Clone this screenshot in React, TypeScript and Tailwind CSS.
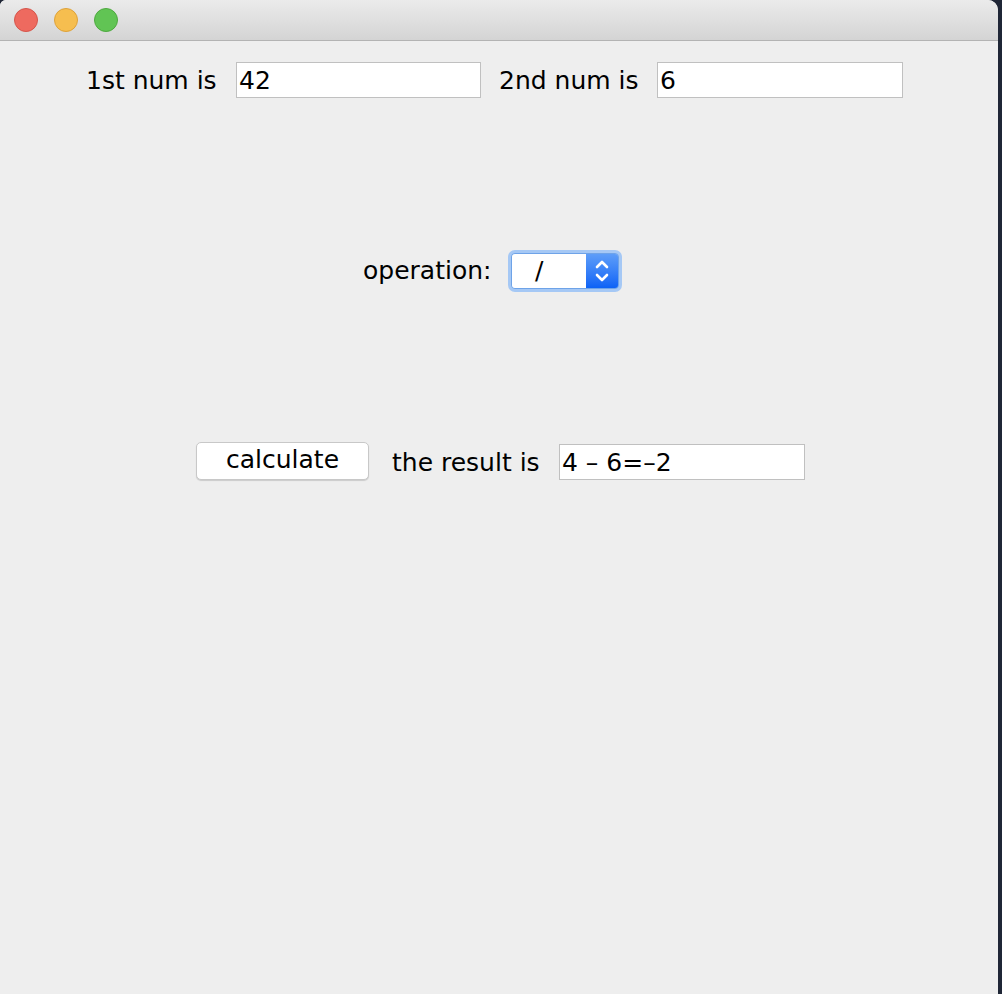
import { useState } from "react";

const font = { fontFamily: '"DejaVu Sans", "Noto Sans", sans-serif' };

const TrafficLights = () => (
  <div className="flex items-center gap-4 pl-[14px]">
    <div className="w-6 h-6 rounded-full bg-[#ee6a5f] border border-[#d5554b]" />
    <div className="w-6 h-6 rounded-full bg-[#f6be4f] border border-[#dea23a]" />
    <div className="w-6 h-6 rounded-full bg-[#61c454] border border-[#4ea93f]" />
  </div>
);

const Field = ({ value, className = "" }: { value: string; className?: string }) => (
  <input
    readOnly
    value={value}
    className={`h-[36px] bg-white border border-[#c0c0c0] pl-[2px] text-[25px] text-black outline-none ${className}`}
    style={font}
  />
);

const Chevrons = () => (
  <svg width="16" height="28" viewBox="0 0 16 28" fill="none" stroke="white" strokeWidth="2.6" strokeLinecap="round" strokeLinejoin="round">
    <path d="M3 10 L8 5 L13 10" />
    <path d="M3 18 L8 23 L13 18" />
  </svg>
);

export default function App() {
  const [op] = useState("/");

  return (
    <div className="w-[1002px] h-[994px] bg-[#1f2636] flex" style={font}>
      <div className="w-[998px] h-full bg-[#eeeeee] rounded-tr-[10px] rounded-tl-[6px] overflow-hidden flex flex-col">
        {/* title bar */}
        <div className="h-[41px] shrink-0 flex items-center bg-gradient-to-b from-[#ebebeb] to-[#d4d4d4] border-b border-[#b3b3b3]">
          <TrafficLights />
        </div>

        {/* first row */}
        <div className="flex items-center pl-[86px] mt-[20px] text-[25px] text-black">
          <span className="w-[150px] mt-[1px]">1st num is</span>
          <Field value="42" className="w-[245px]" />
          <span className="ml-[18px] w-[158px] mt-[1px]">2nd num is</span>
          <Field value="6" className="w-[246px]" />
        </div>

        {/* operation */}
        <div className="flex items-center pl-[363px] mt-[150px] text-[25px] text-black">
          <span className="w-[145px]">operation:</span>
          <div className="h-[42px] w-[114px] shrink-0 rounded-[7px] p-[3px] bg-[#a5c8f5] flex">
            <div className="flex-1 flex rounded-[4px] overflow-hidden border border-[#6ea3e8]">
              <div className="flex-1 bg-white flex items-center pl-[23px]">{op}</div>
              <div className="w-[32px] bg-gradient-to-b from-[#5d9df8] to-[#0b62f6] flex items-center justify-center">
                <Chevrons />
              </div>
            </div>
          </div>
        </div>

        {/* result row */}
        <div className="flex items-center pl-[196px] mt-[150px] text-[25px] text-black">
          <button className="h-[38px] w-[173px] bg-white rounded-[5px] border border-[#c8c8c8] shadow-[0_1px_1px_rgba(0,0,0,0.15)] text-[25px] leading-none pb-[3px]">
            calculate
          </button>
          <span className="ml-[23px] w-[167px] mt-[2px]">the result is</span>
          <Field value="4 &#8211; 6=&#8211;2" className="w-[246px] mt-[2px]" />
        </div>
      </div>
    </div>
  );
}
